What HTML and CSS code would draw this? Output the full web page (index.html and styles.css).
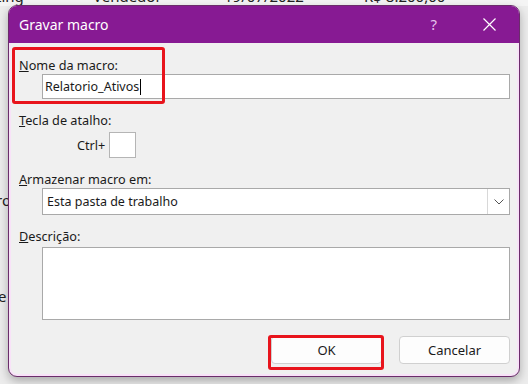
FILE: index.html
```html
<!DOCTYPE html>
<html lang="pt-BR">
<head>
  <meta charset="UTF-8">
  <title>Gravar macro</title>
  <link rel="stylesheet" href="styles.css">
</head>
<body>
  <div class="sheet">
    <div class="sheet-row first-row">
      <span class="cell c1">ting</span>
      <span class="cell c2">Vendedor</span>
      <span class="cell c3">19/07/2022</span>
      <span class="cell c4">R$ 8.200,00</span>
    </div>
    <div class="sheet-row row-ro"><span class="cell">ro</span></div>
    <div class="sheet-row row-e"><span class="cell">e</span></div>
  </div>

  <div class="dialog">
    <div class="titlebar">
      <span class="title">Gravar macro</span>
      <span class="help">?</span>
      <svg class="close" width="13" height="13" viewBox="0 0 13 13">
        <path d="M0.5 0.5 L12.5 12.5 M12.5 0.5 L0.5 12.5" stroke="#fff" stroke-width="1.2" fill="none"/>
      </svg>
    </div>

    <div class="content">
      <div class="label"><u>N</u>ome da macro:</div>
      <div class="field name-field">Relatorio_Ativos<span class="caret"></span></div>

      <div class="label gap-lg"><u>T</u>ecla de atalho:</div>
      <div class="shortcut">
        <span>Ctrl+</span>
        <div class="key-box"></div>
      </div>

      <div class="label gap-lg"><u>A</u>rmazenar macro em:</div>
      <div class="field select">
        <span class="select-text">Esta pasta de trabalho</span>
        <span class="select-btn">
          <svg width="10" height="6" viewBox="0 0 10 6">
            <path d="M0.5 0.5 L5 5 L9.5 0.5" stroke="#555" stroke-width="1" fill="none"/>
          </svg>
        </span>
      </div>

      <div class="label gap-lg"><u>D</u>escrição:</div>
      <div class="field textarea"></div>

      <div class="buttons">
        <button class="btn">OK</button>
        <button class="btn">Cancelar</button>
      </div>
    </div>

    <div class="mark mark-name"></div>
    <div class="mark mark-ok"></div>
  </div>
</body>
</html>
```

FILE: styles.css
```css
body {
  margin: 0;
  width: 528px;
  height: 384px;
  overflow: hidden;
  background-color: #ececec;
  font-family: "Noto Sans", "Open Sans", sans-serif;
  color: #1a1a1a;
  position: relative;
}

.sheet {
  font-size: 15px;
  color: #222;
}

.sheet-row {
  display: flex;
  height: 20px;
  line-height: 20px;
}

.first-row {
  margin-top: -14px;
  background-color: #f4f4f4;
}

.cell {
  white-space: nowrap;
}

.c1 { width: 97px; margin-left: -4px; }
.c2 { width: 131px; }
.c3 { width: 140px; }
.c4 { width: 120px; }

.row-ro {
  margin-top: 184px;
  margin-left: -4px;
}

.row-e {
  margin-top: 76px;
  margin-left: -2px;
}

.dialog {
  position: absolute;
  left: 8px;
  top: 5px;
  width: 510px;
  height: 370px;
  background-color: #f0f0f0;
  border: 1px solid #6b2d6b;
  border-radius: 9px;
  box-shadow: inset 0 0 0 2px #f8e2f8, 0 4px 10px rgba(0, 0, 0, 0.28);
  overflow: hidden;
}

.titlebar {
  display: flex;
  align-items: center;
  height: 37px;
  background-color: #871a93;
  color: #fff;
  padding: 0 0 0 10px;
}

.title {
  flex-grow: 1;
  font-size: 14px;
  margin-top: -1px;
}

.help {
  font-size: 15px;
  color: #e6c4ec;
  margin-right: 46px;
  margin-top: -1px;
}

.close {
  margin-right: 23px;
  margin-top: -1px;
}

.content {
  padding: 13px 9px 0 10px;
  font-size: 12.7px;
}

.label {
  height: 18px;
  line-height: 18px;
}

.gap-lg {
  margin-top: 12px;
}

.field {
  margin-left: 23px;
  background-color: #fff;
  border: 1px solid #a9a9a9;
  box-sizing: border-box;
  font-size: 12.5px;
}

.name-field {
  height: 25px;
  line-height: 23px;
  padding-left: 2px;
}

.caret {
  display: inline-block;
  width: 1px;
  height: 16px;
  margin-left: 1px;
  background-color: #000;
  vertical-align: -4px;
}

.shortcut {
  display: flex;
  align-items: center;
  margin-top: 3px;
  margin-left: 58px;
}

.key-box {
  width: 27px;
  height: 26px;
  margin-left: 4px;
  background-color: #fff;
  border: 1px solid #b5b5b5;
  box-sizing: border-box;
}

.select {
  display: flex;
  height: 27px;
  line-height: 25px;
}

.select-text {
  flex-grow: 1;
  padding-left: 4px;
}

.select-btn {
  width: 21px;
  display: flex;
  align-items: center;
  justify-content: center;
  border-left: 1px solid #d8d8d8;
}

.textarea {
  height: 73px;
  margin-top: 2px;
}

.buttons {
  display: flex;
  justify-content: flex-end;
  gap: 17px;
  margin-top: 16px;
}

.btn {
  width: 111px;
  height: 28px;
  font-family: "Noto Sans", "Open Sans", sans-serif;
  font-size: 13px;
  color: #1a1a1a;
  background-color: #fdfdfd;
  border: 1px solid #d0d0d0;
  border-radius: 4px;
}

.mark {
  position: absolute;
  border: 3px solid #e8141c;
  border-radius: 3px;
}

.mark-name {
  left: 3px;
  top: 41px;
  width: 147px;
  height: 51px;
}

.mark-ok {
  left: 259px;
  top: 329px;
  width: 110px;
  height: 29px;
}
```
